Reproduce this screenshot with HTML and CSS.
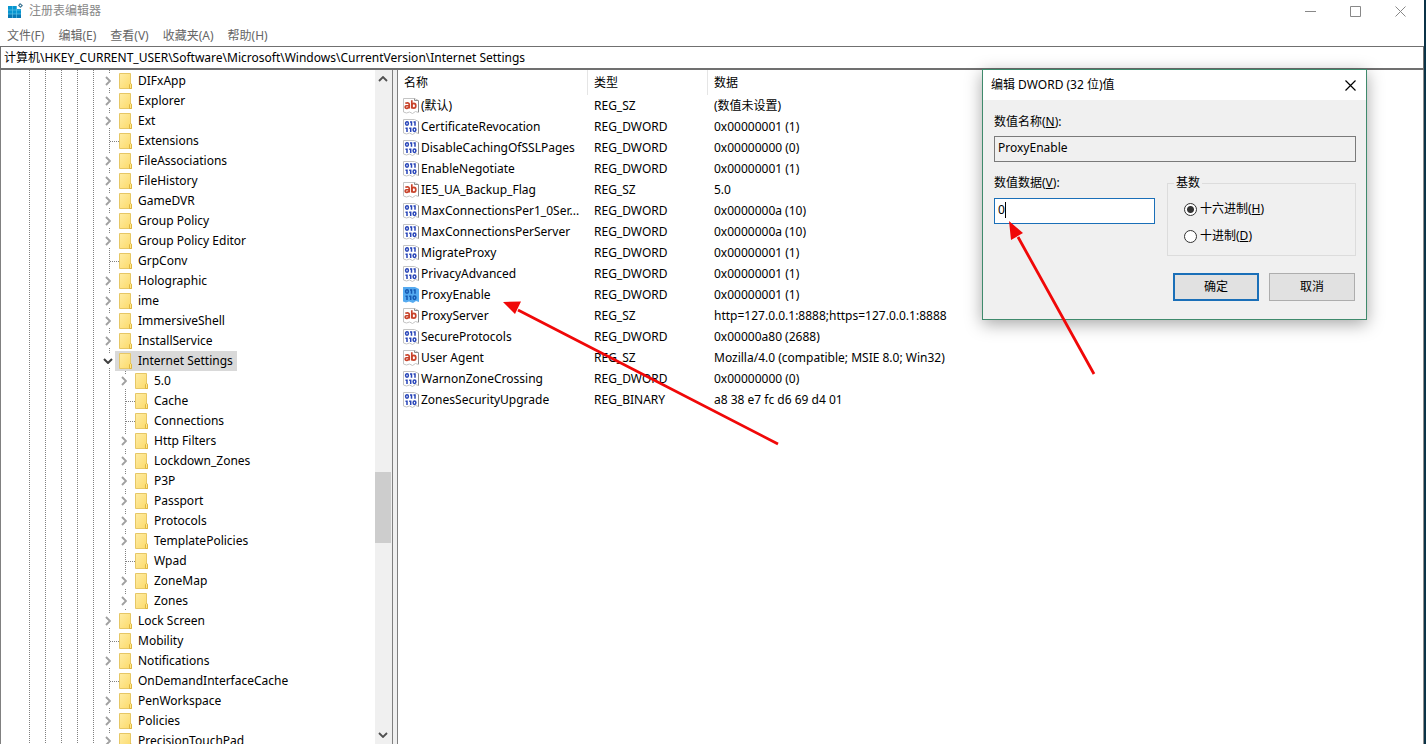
FILE: index.html
```html
<!DOCTYPE html>
<html lang="zh-CN">
<head>
<meta charset="utf-8">
<title>注册表编辑器</title>
<link rel="stylesheet" href="styles.css">
</head>
<body>
<svg class="defs" aria-hidden="true">
  <defs>
    <linearGradient id="paper" x1="0" y1="0" x2="1" y2="1"><stop offset="0" stop-color="#ffeda6"/><stop offset="1" stop-color="#fbd968"/></linearGradient>
    <symbol id="folder" viewBox="0 0 13 16"><path d="M.5.5h11v10l1 .5v4.500H.5z" fill="url(#paper)" stroke="#e6c766"/><path d="M10.500 15.500v-4l1-1 1 1v4z" fill="#ffe88c" stroke="#dfb53f"/></symbol>
    <symbol id="closed" viewBox="0 0 6 10"><path d="M1 1l4 4-4 4" fill="none" stroke="#a0a0a0" stroke-width="1.900"/></symbol>
    <symbol id="open" viewBox="0 0 10 6"><path d="M1 1l4 4 4-4" fill="none" stroke="#404040" stroke-width="2"/></symbol>
    <symbol id="sz" viewBox="0 0 16 16"><path d="M.5.5h11l4 2v12l-3-1-3 2-3-1.500-3 1-3-1z" fill="#fff" stroke="#c4c4c4"/><path d="M11.500.5v2h4M15.500 3v11" fill="none" stroke="#8e8e8e"/><g fill="none" stroke="#c8432b" stroke-width="1.700"><path d="M2.300 5.300q3.900-1.300 3.900 1.200v4M6.200 7.500q-4-.2-4 1.500 0 1.500 1.800 1.300 2.200-.3 2.200-1.800M8.800 2.300v8.200"/><ellipse cx="10.800" cy="7.700" rx="2" ry="2.400"/></g></symbol>
    <symbol id="bits" viewBox="0 0 16 16"><g fill="none" stroke-width="1.500"><ellipse cx="4" cy="4.500" rx="1.400" ry="1.700"/><path d="M8.500 2.200v4.600M7 2.900h1.500M12 2.200v4.600M10.500 2.900H12M4 8.500v4.600M2.500 9.200H4M7.700 8.500v4.600M6.200 9.200h1.500"/><ellipse cx="11.500" cy="10.800" rx="1.400" ry="1.700"/></g></symbol>
    <symbol id="bin" viewBox="0 0 16 16"><path d="M.5.5h11l4 2v12l-3-1-3 2-3-1.500-3 1-3-1z" fill="#fff" stroke="#c4c4c4"/><path d="M15.500 2.500v12" stroke="#8e8e8e"/><use href="#bits" width="16" height="16" stroke="#2744b8"/></symbol>
    <symbol id="binsel" viewBox="0 0 16 16"><path d="M0 0h12l4 2v13l-3-1-3 2-4-1.500-3 1-3-1z" fill="#55aaf0"/><use href="#bits" width="16" height="16" stroke="#1458b2"/></symbol>
  </defs>
</svg>
<div class="window">
  <header class="titlebar">
    <svg class="app-icon" viewBox="0 0 16 16" aria-hidden="true"><path d="M1 3h9v3h4v9H1z" fill="#0795cf"/><path d="M1 11h13v4H1z" fill="#0878b4"/><path d="M5.500 3v12M9.500 3v12M1 7h13M1 11h13" stroke="#5cc3e8" stroke-width=".7"/><path d="M13 0l3 2.500L13.500 5 11 2.500z" fill="#3e7694"/><circle cx="13.400" cy="2.500" r=".8" fill="#fff"/></svg>
    <h1>注册表编辑器</h1>
    <div class="controls">
      <button aria-label="最小化"><svg viewBox="0 0 11 11"><path d="M0 5.500h11"/></svg></button>
      <button aria-label="最大化"><svg viewBox="0 0 11 11"><path d="M.5.5h10v10H.5z"/></svg></button>
      <button aria-label="关闭"><svg viewBox="0 0 11 11"><path d="M.5.5l10 10M10.500.5l-10 10"/></svg></button>
    </div>
  </header>
  <nav class="menu">
    <button>文件(F)</button><button>编辑(E)</button><button>查看(V)</button><button>收藏夹(A)</button><button>帮助(H)</button>
  </nav>
  <input class="address" aria-label="地址" value="计算机\HKEY_CURRENT_USER\Software\Microsoft\Windows\CurrentVersion\Internet Settings">
  <main class="panes">
    <div class="tree-pane">
      <ul class="tree">
        <li><div class="row"><button class="twist" aria-label="展开"><svg><use href="#closed"/></svg></button><span class="key"><svg><use href="#folder"/></svg>DIFxApp</span></div></li>
        <li><div class="row"><button class="twist" aria-label="展开"><svg><use href="#closed"/></svg></button><span class="key"><svg><use href="#folder"/></svg>Explorer</span></div></li>
        <li><div class="row"><button class="twist" aria-label="展开"><svg><use href="#closed"/></svg></button><span class="key"><svg><use href="#folder"/></svg>Ext</span></div></li>
        <li><div class="row"><span class="leaf"></span><span class="key"><svg><use href="#folder"/></svg>Extensions</span></div></li>
        <li><div class="row"><button class="twist" aria-label="展开"><svg><use href="#closed"/></svg></button><span class="key"><svg><use href="#folder"/></svg>FileAssociations</span></div></li>
        <li><div class="row"><button class="twist" aria-label="展开"><svg><use href="#closed"/></svg></button><span class="key"><svg><use href="#folder"/></svg>FileHistory</span></div></li>
        <li><div class="row"><button class="twist" aria-label="展开"><svg><use href="#closed"/></svg></button><span class="key"><svg><use href="#folder"/></svg>GameDVR</span></div></li>
        <li><div class="row"><button class="twist" aria-label="展开"><svg><use href="#closed"/></svg></button><span class="key"><svg><use href="#folder"/></svg>Group Policy</span></div></li>
        <li><div class="row"><button class="twist" aria-label="展开"><svg><use href="#closed"/></svg></button><span class="key"><svg><use href="#folder"/></svg>Group Policy Editor</span></div></li>
        <li><div class="row"><span class="leaf"></span><span class="key"><svg><use href="#folder"/></svg>GrpConv</span></div></li>
        <li><div class="row"><button class="twist" aria-label="展开"><svg><use href="#closed"/></svg></button><span class="key"><svg><use href="#folder"/></svg>Holographic</span></div></li>
        <li><div class="row"><button class="twist" aria-label="展开"><svg><use href="#closed"/></svg></button><span class="key"><svg><use href="#folder"/></svg>ime</span></div></li>
        <li><div class="row"><button class="twist" aria-label="展开"><svg><use href="#closed"/></svg></button><span class="key"><svg><use href="#folder"/></svg>ImmersiveShell</span></div></li>
        <li><div class="row"><button class="twist" aria-label="展开"><svg><use href="#closed"/></svg></button><span class="key"><svg><use href="#folder"/></svg>InstallService</span></div></li>
        <li><div class="row"><button class="twist expanded" aria-label="折叠"><svg><use href="#open"/></svg></button><span class="key selected"><svg><use href="#folder"/></svg>Internet Settings</span></div>
          <ul class="subtree">
            <li><div class="row"><button class="twist" aria-label="展开"><svg><use href="#closed"/></svg></button><span class="key"><svg><use href="#folder"/></svg>5.0</span></div></li>
            <li><div class="row"><span class="leaf"></span><span class="key"><svg><use href="#folder"/></svg>Cache</span></div></li>
            <li><div class="row"><span class="leaf"></span><span class="key"><svg><use href="#folder"/></svg>Connections</span></div></li>
            <li><div class="row"><button class="twist" aria-label="展开"><svg><use href="#closed"/></svg></button><span class="key"><svg><use href="#folder"/></svg>Http Filters</span></div></li>
            <li><div class="row"><button class="twist" aria-label="展开"><svg><use href="#closed"/></svg></button><span class="key"><svg><use href="#folder"/></svg>Lockdown_Zones</span></div></li>
            <li><div class="row"><button class="twist" aria-label="展开"><svg><use href="#closed"/></svg></button><span class="key"><svg><use href="#folder"/></svg>P3P</span></div></li>
            <li><div class="row"><button class="twist" aria-label="展开"><svg><use href="#closed"/></svg></button><span class="key"><svg><use href="#folder"/></svg>Passport</span></div></li>
            <li><div class="row"><button class="twist" aria-label="展开"><svg><use href="#closed"/></svg></button><span class="key"><svg><use href="#folder"/></svg>Protocols</span></div></li>
            <li><div class="row"><button class="twist" aria-label="展开"><svg><use href="#closed"/></svg></button><span class="key"><svg><use href="#folder"/></svg>TemplatePolicies</span></div></li>
            <li><div class="row"><span class="leaf"></span><span class="key"><svg><use href="#folder"/></svg>Wpad</span></div></li>
            <li><div class="row"><button class="twist" aria-label="展开"><svg><use href="#closed"/></svg></button><span class="key"><svg><use href="#folder"/></svg>ZoneMap</span></div></li>
            <li><div class="row"><button class="twist" aria-label="展开"><svg><use href="#closed"/></svg></button><span class="key"><svg><use href="#folder"/></svg>Zones</span></div></li>
          </ul>
        </li>
        <li><div class="row"><button class="twist" aria-label="展开"><svg><use href="#closed"/></svg></button><span class="key"><svg><use href="#folder"/></svg>Lock Screen</span></div></li>
        <li><div class="row"><span class="leaf"></span><span class="key"><svg><use href="#folder"/></svg>Mobility</span></div></li>
        <li><div class="row"><button class="twist" aria-label="展开"><svg><use href="#closed"/></svg></button><span class="key"><svg><use href="#folder"/></svg>Notifications</span></div></li>
        <li><div class="row"><span class="leaf"></span><span class="key"><svg><use href="#folder"/></svg>OnDemandInterfaceCache</span></div></li>
        <li><div class="row"><button class="twist" aria-label="展开"><svg><use href="#closed"/></svg></button><span class="key"><svg><use href="#folder"/></svg>PenWorkspace</span></div></li>
        <li><div class="row"><button class="twist" aria-label="展开"><svg><use href="#closed"/></svg></button><span class="key"><svg><use href="#folder"/></svg>Policies</span></div></li>
        <li><div class="row"><button class="twist" aria-label="展开"><svg><use href="#closed"/></svg></button><span class="key"><svg><use href="#folder"/></svg>PrecisionTouchPad</span></div></li>
      </ul>
      <div class="scrollbar">
        <button class="up" aria-label="向上滚动"><svg viewBox="0 0 10 6"><path d="M1 5l4-4 4 4"/></svg></button>
        <div class="track"><span class="before"></span><span class="thumb"></span><span class="after"></span></div>
        <button aria-label="向下滚动"><svg viewBox="0 0 10 6"><path d="M1 1l4 4 4-4"/></svg></button>
      </div>
    </div>
    <div class="splitter"></div>
    <div class="list-pane">
      <table class="values">
        <colgroup><col class="c-name"><col class="c-type"><col></colgroup>
        <thead><tr><th>名称</th><th>类型</th><th>数据</th></tr></thead>
        <tbody>
          <tr><td><span class="name"><svg><use href="#sz"/></svg>(默认)</span></td><td>REG_SZ</td><td>(数值未设置)</td></tr>
          <tr><td><span class="name"><svg><use href="#bin"/></svg>CertificateRevocation</span></td><td>REG_DWORD</td><td>0x00000001 (1)</td></tr>
          <tr><td><span class="name"><svg><use href="#bin"/></svg>DisableCachingOfSSLPages</span></td><td>REG_DWORD</td><td>0x00000000 (0)</td></tr>
          <tr><td><span class="name"><svg><use href="#bin"/></svg>EnableNegotiate</span></td><td>REG_DWORD</td><td>0x00000001 (1)</td></tr>
          <tr><td><span class="name"><svg><use href="#sz"/></svg>IE5_UA_Backup_Flag</span></td><td>REG_SZ</td><td>5.0</td></tr>
          <tr><td><span class="name"><svg><use href="#bin"/></svg>MaxConnectionsPer1_0Ser...</span></td><td>REG_DWORD</td><td>0x0000000a (10)</td></tr>
          <tr><td><span class="name"><svg><use href="#bin"/></svg>MaxConnectionsPerServer</span></td><td>REG_DWORD</td><td>0x0000000a (10)</td></tr>
          <tr><td><span class="name"><svg><use href="#bin"/></svg>MigrateProxy</span></td><td>REG_DWORD</td><td>0x00000001 (1)</td></tr>
          <tr><td><span class="name"><svg><use href="#bin"/></svg>PrivacyAdvanced</span></td><td>REG_DWORD</td><td>0x00000001 (1)</td></tr>
          <tr><td><span class="name"><svg><use href="#binsel"/></svg>ProxyEnable</span></td><td>REG_DWORD</td><td>0x00000001 (1)</td></tr>
          <tr><td><span class="name"><svg><use href="#sz"/></svg>ProxyServer</span></td><td>REG_SZ</td><td>http=127.0.0.1:8888;https=127.0.0.1:8888</td></tr>
          <tr><td><span class="name"><svg><use href="#bin"/></svg>SecureProtocols</span></td><td>REG_DWORD</td><td>0x00000a80 (2688)</td></tr>
          <tr><td><span class="name"><svg><use href="#sz"/></svg>User Agent</span></td><td>REG_SZ</td><td>Mozilla/4.0 (compatible; MSIE 8.0; Win32)</td></tr>
          <tr><td><span class="name"><svg><use href="#bin"/></svg>WarnonZoneCrossing</span></td><td>REG_DWORD</td><td>0x00000000 (0)</td></tr>
          <tr><td><span class="name"><svg><use href="#bin"/></svg>ZonesSecurityUpgrade</span></td><td>REG_BINARY</td><td>a8 38 e7 fc d6 69 d4 01</td></tr>
        </tbody>
      </table>
    </div>
  </main>
</div>

<form class="dialog" role="dialog" aria-labelledby="dlg-title">
  <header class="dialog-title">
    <h2 id="dlg-title">编辑 DWORD (32 位)值</h2>
    <button type="button" aria-label="关闭"><svg viewBox="0 0 11 11"><path d="M.5.5l10 10M10.500.5l-10 10"/></svg></button>
  </header>
  <div class="dialog-body">
    <label for="vname">数值名称(<u>N</u>):</label>
    <input class="field readonly" id="vname" value="ProxyEnable" readonly>
    <div class="columns">
      <div class="data">
        <label for="vdata">数值数据(<u>V</u>):</label>
        <div class="editing"><input class="field" id="vdata" value="0"><span class="caret"></span></div>
      </div>
      <fieldset>
        <legend>基数</legend>
        <label><input type="radio" name="base" checked>十六进制(<u>H</u>)</label>
        <label><input type="radio" name="base">十进制(<u>D</u>)</label>
      </fieldset>
    </div>
    <div class="actions">
      <button type="button" class="primary">确定</button>
      <button type="button">取消</button>
    </div>
  </div>
</form>

<svg class="pointers" viewBox="0 0 1426 744" aria-hidden="true">
  <path d="M778 444L518 310M1094 374L1018 237" fill="none" stroke="#f00808" stroke-width="2.800"/>
  <path d="M503 302l18-.5-6 12.500zM1009 221l14 12-12 7z" fill="#f00808"/>
</svg>
</body>
</html>
```
FILE: styles.css
```css
* { box-sizing: border-box; }

body {
  margin: 0;
  background: #0b3347;
  color: #000;
  font: 12px/20px "Noto Sans", "Noto Sans CJK SC", sans-serif;
}

button, input { font: inherit; color: inherit; }
button { border: 0; padding: 0; background: none; }
h1, h2 { margin: 0; font-size: 12px; font-weight: 400; }
ul { margin: 0; padding: 0; list-style: none; }
svg { display: block; flex: none; }
.defs { position: absolute; width: 0; height: 0; }

.window {
  display: flex;
  flex-direction: column;
  height: 100vh;
  margin-right: 2px;
  background: #fff;
  overflow: hidden;
}

.titlebar {
  display: flex;
  align-items: center;
  height: 22px;
  padding: 0 1px 0 7px;
  color: #888;
}
.app-icon { width: 16px; height: 16px; margin-right: 6px; }
.controls { display: flex; margin-left: auto; }
.controls button { width: 45px; height: 20px; display: grid; place-items: center; }
.controls svg { width: 11px; height: 11px; fill: none; stroke: #888; }

.menu {
  display: flex;
  gap: 14px;
  height: 24px;
  padding: 4px 7px 0;
  color: #666;
}

.address {
  width: 100%;
  height: 24px;
  padding: 0 3px 1px;
  border: 1px solid #707070;
  border-bottom-width: 2px;
  outline: 0;
  background: #fff;
}

.panes { display: flex; flex: 1; min-height: 0; border-left: 1px solid #808080; }
.tree-pane { display: flex; width: 391px; flex: none; overflow: hidden; }

.tree {
  flex: 1;
  background-image:
    linear-gradient(#808080 50%, transparent 50%), linear-gradient(#808080 50%, transparent 50%),
    linear-gradient(#808080 50%, transparent 50%), linear-gradient(#808080 50%, transparent 50%),
    linear-gradient(#808080 50%, transparent 50%), linear-gradient(#808080 50%, transparent 50%);
  background-size: 1px 2px;
  background-repeat: repeat-y;
  background-position: 28px 0, 44px 0, 60px 0, 76px 0, 92px 0, 108px 0;
}
.subtree {
  background: linear-gradient(#808080 50%, transparent 50%) 124px 0 / 1px 2px repeat-y;
}
.row { display: flex; align-items: center; height: 20px; padding-left: 101px; }
.tree > li:first-child { padding-top: 1px; }
.subtree .row { padding-left: 117px; }
.twist { display: grid; place-items: center; width: 13px; height: 14px; padding-right: 1px; background: #fff; }
.twist svg { width: 6px; height: 10px; }
.twist.expanded svg { width: 10px; height: 6px; }
.leaf {
  width: 9px;
  height: 1px;
  margin: 0 -4px 0 8px;
  background: repeating-linear-gradient(90deg, #808080 0 1px, transparent 1px 2px);
}
.key { display: flex; align-items: center; gap: 6px; height: 20px; padding: 0 4px; white-space: nowrap; }
.key svg { width: 13px; height: 16px; }
.key.selected { background: #d9d9d9; }

.scrollbar { display: flex; flex-direction: column; width: 17px; background: #f0f0f0; }
.scrollbar button { display: grid; place-items: center; height: 18px; padding-right: 2px; }
.scrollbar svg { width: 10px; height: 6px; fill: none; stroke: #505050; stroke-width: 1.8px; }
.track { display: flex; flex: 1; flex-direction: column; padding-right: 1px; }
.before { flex: 384; }
.thumb { flex: 71; background: #cdcdcd; }
.after { flex: 183; }

.splitter { width: 6px; flex: none; border: solid #808080; border-width: 0 1px; background: #f0f0f0; }

.list-pane { flex: 1; min-width: 0; border-right: 1px solid #909090; }
.values { width: 100%; border-collapse: separate; border-spacing: 0; table-layout: fixed; }
.c-name { width: 190px; }
.c-type { width: 120px; }
.values th {
  height: 25px;
  padding: 0 6px;
  border-right: 1px solid #e5e5e5;
  font-weight: 400;
  text-align: left;
}
.values th:last-child { border-right: 0; }
.values td { height: 21px; padding: 0 6px; white-space: nowrap; }
.values td:first-child { padding: 0 0 0 5px; }
.name { display: flex; align-items: center; gap: 2px; }
.name svg { width: 16px; height: 16px; }

.dialog {
  position: absolute;
  top: 69px;
  right: 59px;
  width: 385px;
  border: 1px solid #3f8a6c;
  background: #f0f0f0;
  box-shadow: 0 4px 16px rgba(0, 0, 0, .35);
}
.dialog-title { display: flex; align-items: center; height: 30px; padding-left: 8px; background: #fff; }
.dialog-title button { display: grid; place-items: center; width: 31px; height: 28px; margin-left: auto; }
.dialog-title svg { width: 11px; height: 11px; fill: none; stroke: #000; stroke-width: 1.2px; }
.dialog-body { display: flex; flex-direction: column; padding: 12px 10px 18px 11px; }
.field {
  display: block;
  width: 100%;
  height: 26px;
  padding: 0 3px 3px;
  border: 1px solid #1a6fb8;
  outline: 0;
  background: #fff;
}
.field.readonly { margin-top: 4px; border-color: #7a7a7a; background: #f0f0f0; }
.columns { display: flex; gap: 12px; margin-top: 11px; }
.data { width: 161px; }
.editing { position: relative; margin-top: 5px; }
.caret { position: absolute; left: 11px; top: 4px; width: 1px; height: 16px; background: #000; }
fieldset {
  display: flex;
  flex: 1;
  flex-direction: column;
  gap: 7px;
  min-width: 0;
  height: 83px;
  margin: 0;
  padding: 6px 16px 0;
  border: 1px solid #dcdcdc;
}
legend { margin-left: -10px; padding: 0 2px; }
fieldset label { display: flex; align-items: center; }
fieldset input {
  appearance: none;
  width: 13px;
  height: 13px;
  margin: 0 3px 0 0;
  border: 1px solid #333;
  border-radius: 50%;
  background: #fff;
}
fieldset input:checked { background: radial-gradient(circle, #333 3px, #fff 4px); }
.actions { display: flex; justify-content: flex-end; gap: 10px; margin-top: 17px; padding-right: 1px; }
.actions button { width: 86px; height: 28px; border: 1px solid #adadad; background: #e1e1e1; }
.actions .primary { border: 2px solid #1a6fb8; }

.pointers { position: absolute; top: 0; left: 0; width: 1426px; height: 744px; pointer-events: none; }
```
